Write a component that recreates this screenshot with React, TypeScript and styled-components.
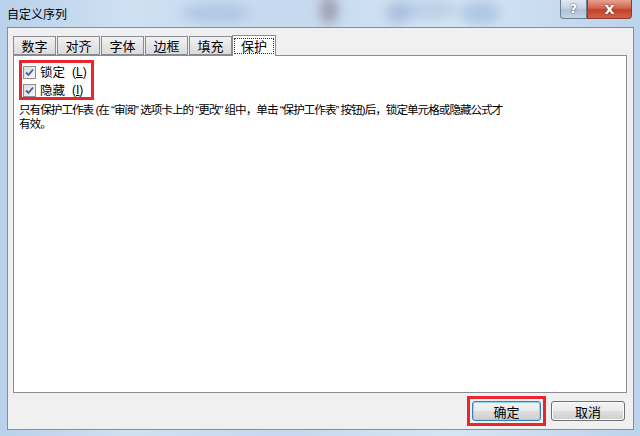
import React from 'react'
import styled, { createGlobalStyle } from 'styled-components'

const Global = createGlobalStyle`
  html, body { margin: 0; padding: 0; }
  body {
    width: 640px;
    height: 436px;
    overflow: hidden;
    font-family: "Noto Sans CJK SC", "Liberation Sans", sans-serif;
    font-size: 12px;
    color: #000;
  }
`

const Window = styled.div`
  width: 640px;
  height: 436px;
  box-sizing: border-box;
  display: flex;
  flex-direction: column;
  background: linear-gradient(90deg, #b9d1ea 0%, #cfe0f2 20%, #c4d8ee 45%, #d6e5f4 70%, #bcd3ec 100%);
  position: relative;
  overflow: hidden;
`

const Glow = styled.div`
  position: absolute;
  border-radius: 50%;
  filter: blur(6px);
  opacity: 0.55;
`

const TitleBar = styled.div`
  height: 27px;
  display: flex;
  align-items: flex-start;
  justify-content: space-between;
  padding-left: 7px;
  position: relative;
`

const Title = styled.span`
  line-height: 27px;
  font-size: 12px;
`

const Caption = styled.div`
  display: flex;
  margin-right: 8px;
`

const CapButton = styled.div<{ $close?: boolean }>`
  width: ${p => (p.$close ? 45 : 27)}px;
  height: 19px;
  box-sizing: border-box;
  border: 1px solid ${p => (p.$close ? '#8a3a2e' : '#6d7d93')};
  border-top: none;
  border-radius: ${p => (p.$close ? '0 0 4px 0' : '0 0 0 4px')};
  background: ${p =>
    p.$close
      ? 'linear-gradient(#e7a08e 0%, #d2654d 45%, #c5412a 55%, #d0634b 100%)'
      : 'linear-gradient(#dfe8f2 0%, #c4d3e4 45%, #aebfd6 55%, #c6d5e7 100%)'};
  display: flex;
  align-items: center;
  justify-content: center;
  color: #fff;
  font-family: "DejaVu Sans", sans-serif;
  font-weight: bold;
  font-size: ${p => (p.$close ? 13 : 12)}px;
  text-shadow: 0 0 2px #333;
`

const Client = styled.div`
  flex: 1;
  margin: 0 6px 6px 7px;
  background: #f0f0f0;
  border: 1px solid #7d8fa8;
  display: flex;
  flex-direction: column;
  padding: 7px 7px 0 5px;
  position: relative;
`

const Tabs = styled.div`
  display: flex;
  align-items: flex-end;
  height: 20px;
  position: relative;
  z-index: 1;
`

const Tab = styled.div<{ $active?: boolean }>`
  box-sizing: border-box;
  height: ${p => (p.$active ? 21 : 19)}px;
  width: ${p => (p.$active ? 44 : 43)}px;
  margin-right: 1px;
  margin-left: ${p => (p.$active ? -1 : 0)}px;
  margin-bottom: ${p => (p.$active ? -1 : 0)}px;
  border: 1px solid #898c95;
  border-bottom: ${p => (p.$active ? 'none' : '1px solid #898c95')};
  background: ${p => (p.$active ? '#fff' : 'linear-gradient(#f3f3f3, #e5e5e5 50%, #dcdcdc)')};
  display: flex;
  align-items: center;
  justify-content: center;
  font-size: 13px;
`

const Focus = styled.span`
  outline: 1px dotted #333;
  padding: 0 6px;
  line-height: 14px;
`

const Panel = styled.div`
  height: 338px;
  width: 614px;
  box-sizing: border-box;
  background: #fff;
  border: 1px solid #898c95;
  padding: 4px 5px 0 5px;
  display: flex;
  flex-direction: column;
`

const Marked = styled.div`
  align-self: flex-start;
  border: 3px solid #e8262c;
  padding: 2px 4px 0 1px;
  display: flex;
  flex-direction: column;
  gap: 4px;
`

const CheckRow = styled.label`
  display: flex;
  align-items: center;
  gap: 4px;
  height: 14px;
  line-height: 14px;
  font-size: 12.5px;
`

const Key = styled.span`
  font-family: "Liberation Sans", sans-serif;
  font-size: 12px;
  line-height: 14px;
  margin-left: 3px;
`

const Box = styled.span`
  width: 13px;
  height: 13px;
  box-sizing: border-box;
  border: 1px solid #8e8f8f;
  background: linear-gradient(135deg, #dcdcdc, #f6f6f6);
  display: flex;
  align-items: center;
  justify-content: center;
`

const Note = styled.p`
  margin: 3px 0 0 0;
  font-family: "Liberation Sans", "Noto Sans CJK SC", sans-serif;
  font-size: 11.6px;
  line-height: 14px;
  letter-spacing: -1px;
  white-space: nowrap;
`

const Footer = styled.div`
  display: flex;
  justify-content: flex-end;
  align-items: center;
  gap: 5px;
  height: 36px;
  padding-right: 1px;
`

const Highlight = styled.div`
  border: 3px solid #e8262c;
  padding: 2px;
`

const Button = styled.button<{ $default?: boolean }>`
  width: ${p => (p.$default ? 69 : 74)}px;
  height: 20px;
  padding: 0;
  border: 1px solid ${p => (p.$default ? '#3c7fb1' : '#707070')};
  border-radius: 3px;
  background: linear-gradient(#f2f2f2 0%, #ebebeb 48%, #dddddd 52%, #cfcfcf 100%);
  box-shadow: ${p => (p.$default ? 'inset 0 0 0 1px #8fd3f5' : 'inset 0 0 0 1px #fcfcfc')};
  font-family: inherit;
  font-size: 13px;
  color: #000;
`

function Check() {
  return (
    <Box>
      <svg width="9" height="9" viewBox="0 0 9 9">
        <path d="M1 4.5 L3.5 7 L8 1.5" fill="none" stroke="#3a5fa8" strokeWidth="1.8" />
      </svg>
    </Box>
  )
}

export default function App() {
  const tabs = ['数字', '对齐', '字体', '边框', '填充']

  return (
    <Window>
      <Global />
      <Glow style={{ left: 180, top: 4, width: 70, height: 18, background: '#9bb6d6' }} />
      <Glow style={{ left: 400, top: 0, width: 60, height: 20, background: '#a9c1dd' }} />
      <Glow style={{ left: 320, top: -4, width: 18, height: 28, background: '#7b6a7a' }} />
      <Glow style={{ left: 385, top: 2, width: 26, height: 22, background: '#8daad0' }} />
      <Glow style={{ left: 460, top: 2, width: 40, height: 22, background: '#8fb0d6' }} />
      <TitleBar>
        <Title>自定义序列</Title>
        <Caption>
          <CapButton>?</CapButton>
          <CapButton $close>X</CapButton>
        </Caption>
      </TitleBar>
      <Client>
        <Tabs>
          {tabs.map(t => (
            <Tab key={t}>{t}</Tab>
          ))}
          <Tab $active>
            <Focus>保护</Focus>
          </Tab>
        </Tabs>
        <Panel>
          <Marked>
            <CheckRow>
              <Check />
              锁定<Key>(<u>L</u>)</Key>
            </CheckRow>
            <CheckRow>
              <Check />
              隐藏<Key>(<u>I</u>)</Key>
            </CheckRow>
          </Marked>
          <Note>
            只有保护工作表 (在 “审阅” 选项卡上的 “更改” 组中，单击 “保护工作表” 按钮)后，锁定单元格或隐藏公式才
            <br />
            有效。
          </Note>
        </Panel>
        <Footer>
          <Highlight>
            <Button $default>确定</Button>
          </Highlight>
          <Button>取消</Button>
        </Footer>
      </Client>
    </Window>
  )
}
